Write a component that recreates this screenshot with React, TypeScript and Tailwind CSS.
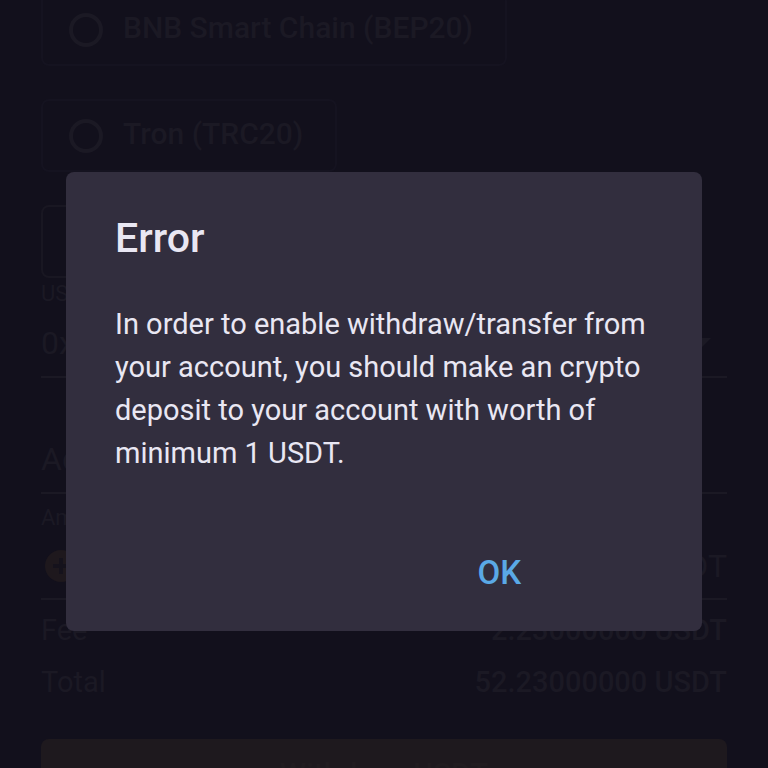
const networks = [
  { id: "bep20", label: "BNB Smart Chain (BEP20)" },
  { id: "trc20", label: "Tron (TRC20)" },
];

function NetworkOption({ id, label }: { id: string; label: string }) {
  return (
    <label
      htmlFor={id}
      className="flex h-[73px] items-center gap-5 rounded-lg border-2 border-[#151320] pr-8 pl-[26px] text-[30px] font-medium"
    >
      <input
        id={id}
        type="radio"
        name="network"
        className="size-[34px] appearance-none rounded-full border-4 border-[#1b1924]"
      />
      <span className="pb-1">{label}</span>
    </label>
  );
}

function SummaryRow({ label, value }: { label: string; value: string }) {
  return (
    <div className="flex justify-between text-[29px] leading-[52px]">
      <dt>{label}</dt>
      <dd className="font-medium">{value}</dd>
    </div>
  );
}

function WithdrawForm() {
  return (
    <form className="-mt-[7px] px-[41px] text-[#1b1924]">
      <fieldset className="flex flex-col items-start gap-[33px]">
        {networks.map((n) => (
          <NetworkOption key={n.id} id={n.id} label={n.label} />
        ))}
        <input
          type="text"
          aria-label="Memo"
          className="h-[73px] w-80 rounded-lg border-2 border-[#191722] bg-transparent"
        />
      </fieldset>

      <label htmlFor="wallet" className="block text-[22px] leading-8">
        USDT
      </label>
      <div className="flex h-[68px] items-center border-b-2 border-[#1b1924] pr-4">
        <select id="wallet" className="min-w-0 flex-1 appearance-none bg-transparent text-[32px]">
          <option>0x</option>
        </select>
        <svg viewBox="0 0 20 10" className="w-5" fill="currentColor" aria-hidden="true">
          <path d="M0 0h20L10 10z" />
        </svg>
      </div>

      <input
        type="text"
        aria-label="Address"
        placeholder="Address"
        className="mt-12 block h-[68px] w-full border-b-2 border-[#1b1924] bg-transparent text-[32px] placeholder:text-[#1b1924]"
      />

      <label htmlFor="amount" className="block pt-2 text-[22px] leading-8">
        Amount
      </label>
      <div className="flex h-[66px] items-center gap-4 border-b-2 border-[#1b1924] pl-1 text-[32px]">
        <svg viewBox="0 0 32 32" className="size-8" aria-hidden="true">
          <circle cx="16" cy="16" r="16" fill="#1e181d" />
          <path d="M14 8h4v6h6v4h-6v6h-4v-6H8v-4h6z" fill="#15121c" />
        </svg>
        <input id="amount" type="text" className="min-w-0 flex-1 bg-transparent" />
        <span>USDT</span>
      </div>

      <dl className="pt-1">
        <SummaryRow label="Fee" value="2.23000000 USDT" />
        <SummaryRow label="Total" value="52.23000000 USDT" />
      </dl>

      <button
        type="button"
        className="mt-[31px] h-[68px] w-full rounded-lg bg-[#1e191e] text-[30px] font-medium text-[#211c20]"
      >
        Withdraw USDT
      </button>
    </form>
  );
}

export default function App() {
  return (
    <div className="relative h-screen overflow-hidden bg-[#12101c] font-['Roboto',sans-serif]">
      <WithdrawForm />
      <div className="absolute inset-0 px-[66px] pt-[172px]">
        <div
          role="alertdialog"
          aria-modal="true"
          aria-labelledby="error-title"
          aria-describedby="error-message"
          className="rounded-lg bg-[#322e3e] px-[49px] pt-10 pb-7 text-[#e9e7f3]"
        >
          <h2 id="error-title" className="text-[41px] leading-[52px] font-medium">
            Error
          </h2>
          <p id="error-message" className="mt-[39px] text-[29px] leading-[43px]">
            In order to enable withdraw/transfer from your account, you should make an crypto deposit to your
            account with worth of minimum 1 USDT.
          </p>
          <div className="mt-[68px] flex justify-end pr-[116px]">
            <button type="button" className="h-[60px] px-4 text-[33px] font-medium text-[#5aa9e6]">
              OK
            </button>
          </div>
        </div>
      </div>
    </div>
  );
}
